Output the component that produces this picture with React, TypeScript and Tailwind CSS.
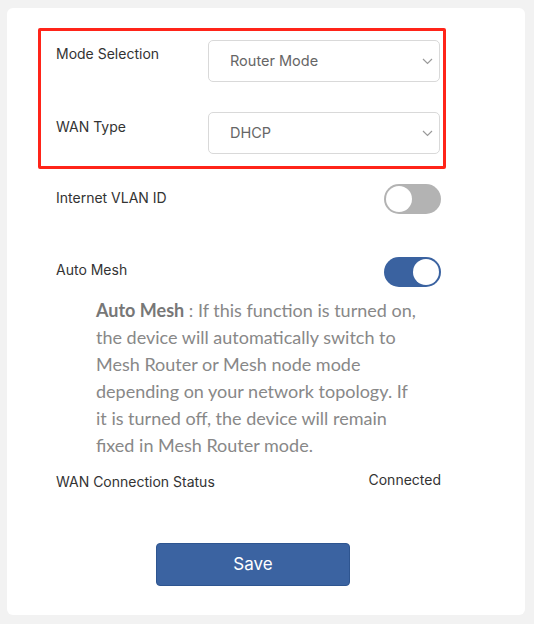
import React from "react";

function Chevron() {
  return (
    <svg width="11" height="7" viewBox="0 0 11 7" fill="none" className="shrink-0">
      <path d="M1 1l4.5 4.5L10 1" stroke="#9a9a9a" strokeWidth="1.2" />
    </svg>
  );
}

function Select({ value }: { value: string }) {
  return (
    <div className="flex h-[42px] w-[232px] items-center justify-between rounded-[5px] border border-[#d9d9d9] bg-white pl-[21px] pr-[6px] text-[14.5px] text-[#666]">
      <span>{value}</span>
      <Chevron />
    </div>
  );
}

function Toggle({ on }: { on: boolean }) {
  return (
    <div
      className={
        on
          ? "flex h-[30px] w-[57px] items-center justify-end rounded-full bg-[#3a62a0] p-[2px]"
          : "flex h-[30px] w-[57px] items-center justify-start rounded-full bg-[#b3b3b3] p-[2px]"
      }
    >
      <div className="h-[26px] w-[26px] rounded-full bg-white" />
    </div>
  );
}

export default function App() {
  return (
    <div
      className="min-h-[624px] bg-[#f2f2f2] pb-[9px] pl-[7px] pr-[9px] pt-[8px]"
      style={{ fontFamily: "Inter, 'Noto Sans', sans-serif" }}
    >
      <div className="flex h-[607px] flex-col rounded-[6px] bg-white pl-[31px] pr-[84px] pt-[20px]">
        {/* highlighted block */}
        <div className="flex w-[408px] flex-col gap-[30px] rounded-[2px] border-[3px] border-[#ff2419] pb-[12px] pl-[15px] pr-[3px] pt-[9px]">
          <div className="flex items-start justify-between">
            <span className="pt-[3px] text-[14px] text-[#333]">Mode Selection</span>
            <Select value="Router Mode" />
          </div>
          <div className="flex items-start justify-between">
            <span className="pt-[4px] text-[14px] text-[#333]">WAN Type</span>
            <Select value="DHCP" />
          </div>
        </div>

        <div className="mt-[15px] flex flex-col pl-[18px]">
          <div className="flex items-start justify-between">
            <span className="pt-[3px] text-[14px] text-[#333]">Internet VLAN ID</span>
            <Toggle on={false} />
          </div>

          <div className="mt-[43px] flex items-start justify-between">
            <span className="pt-[2px] text-[14px] text-[#333]">Auto Mesh</span>
            <Toggle on={true} />
          </div>

          <p
            className="mt-[10px] w-[362px] pl-[40px] text-[18px] leading-[27px] text-[#888]"
            style={{ fontFamily: "Lato, 'Noto Sans', sans-serif" }}
          >
            <span className="font-bold text-[#777]">Auto Mesh</span> : If this function is turned on, the device
            will automatically switch to Mesh Router or Mesh node mode depending on your network topology. If it
            is turned off, the device will remain fixed in Mesh Router mode.
          </p>

          <div className="mt-[10px] flex items-start justify-between text-[14px] text-[#333]">
            <span className="pt-[2px]">WAN Connection Status</span>
            <span>Connected</span>
          </div>
        </div>

        <div className="mt-[51px] flex">
          <button className="ml-[118px] h-[43px] w-[194px] rounded-[4px] border border-[#2e5590] bg-[#3b63a1] text-[17px] text-white">
            Save
          </button>
        </div>
      </div>
    </div>
  );
}
